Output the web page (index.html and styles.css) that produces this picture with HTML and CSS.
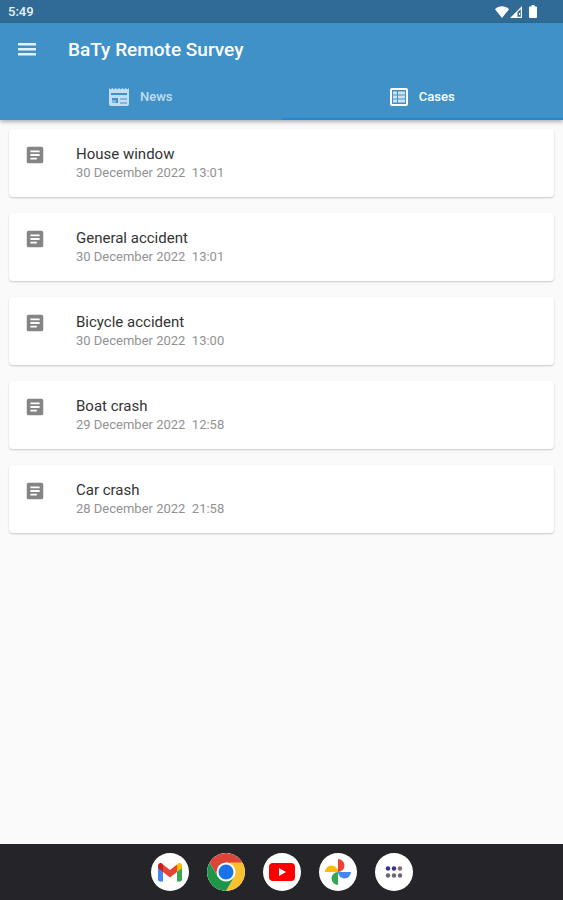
FILE: index.html
```html
<!DOCTYPE html>
<html lang="en">
<head>
    <meta charset="UTF-8">
    <meta name="viewport" content="width=device-width, initial-scale=1.0">
    <title>BaTy Remote Survey</title>
    <link rel="stylesheet" href="styles.css">
</head>
<body>
    <svg class="sprite" aria-hidden="true">
        <symbol id="article" viewBox="0 0 24 24">
            <path fill="currentColor" fill-rule="evenodd" d="M5 3h14a2 2 0 0 1 2 2v14a2 2 0 0 1-2 2H5a2 2 0 0 1-2-2V5a2 2 0 0 1 2-2zM7 7v2h10V7zM7 11v2h10v-2zM7 15v2h7v-2z"/>
        </symbol>
    </svg>

    <div class="status-bar">
        <span>5:49</span>
        <div class="status-icons">
            <svg width="14" height="12" viewBox="0 0 14 12"><path fill="#fff" d="M7 12L0 3.200C4-.6 10-.6 14 3.200z"/></svg>
            <svg width="12" height="12" viewBox="0 0 12 12"><path fill="#fff" fill-rule="evenodd" d="M12 0v12H0zM10.800 3L7.500 6.300v4.500h3.300z"/><path fill="#fff" d="M9 7h1v2H9z"/></svg>
            <svg class="battery" width="8" height="13" viewBox="0 0 8 13"><path fill="#fff" d="M2.500 0h3v1.500H7a1 1 0 0 1 1 1V12a1 1 0 0 1-1 1H1a1 1 0 0 1-1-1V2.500a1 1 0 0 1 1-1h1.500z"/></svg>
        </div>
    </div>

    <header class="header">
        <div class="toolbar">
            <button class="menu-btn" aria-label="Open menu">
                <svg width="18" height="13" viewBox="0 0 18 13"><path fill="#e4f1fa" d="M0 0h18v2.500H0zM0 5h18v2.500H0zM0 10h18v2.500H0z"/></svg>
            </button>
            <h1>BaTy Remote Survey</h1>
        </div>
        <nav class="tabs">
            <a class="tab" href="#news">
                <svg width="20" height="18" viewBox="0 0 20 18"><path fill="currentColor" fill-rule="evenodd" d="M0 0l1.700 1.500L3.300 0 5 1.500 6.700 0l1.600 1.500L10 0l1.700 1.500L13.300 0 15 1.500 16.700 0l1.600 1.500L20 0v16a2 2 0 0 1-2 2H2a2 2 0 0 1-2-2zM2 5v2h16V5zM3 10v5h6v-5zM11 10v2h7v-2zM11 14v2h7v-2z"/><path fill="currentColor" opacity=".5" d="M11 10h7v6h-7zM3 12h4v3H3z"/></svg>
                News
            </a>
            <a class="tab active" href="#cases" aria-current="page">
                <svg width="18" height="18" viewBox="0 0 18 18"><rect x="1" y="1" width="16" height="16" rx="1" fill="none" stroke="currentColor" stroke-width="2"/><path fill="currentColor" opacity=".75" d="M3 3.500h4v3H3zM8 3.500h7v3H8zM3 7.500h4v3H3zM8 7.500h7v3H8zM3 11.500h4v3H3zM8 11.500h7v3H8z"/></svg>
                Cases
            </a>
        </nav>
    </header>

    <main class="cases">
        <article class="case">
            <svg class="case-icon"><use href="#article"/></svg>
            <div>
                <h2>House window</h2>
                <p>30 December 2022&nbsp; 13:01</p>
            </div>
        </article>
        <article class="case">
            <svg class="case-icon"><use href="#article"/></svg>
            <div>
                <h2>General accident</h2>
                <p>30 December 2022&nbsp; 13:01</p>
            </div>
        </article>
        <article class="case">
            <svg class="case-icon"><use href="#article"/></svg>
            <div>
                <h2>Bicycle accident</h2>
                <p>30 December 2022&nbsp; 13:00</p>
            </div>
        </article>
        <article class="case">
            <svg class="case-icon"><use href="#article"/></svg>
            <div>
                <h2>Boat crash</h2>
                <p>29 December 2022&nbsp; 12:58</p>
            </div>
        </article>
        <article class="case">
            <svg class="case-icon"><use href="#article"/></svg>
            <div>
                <h2>Car crash</h2>
                <p>28 December 2022&nbsp; 21:58</p>
            </div>
        </article>
    </main>

    <footer class="dock">
        <button class="app" aria-label="Gmail">
            <svg viewBox="0 0 38 38">
                <path fill="#4285f4" d="M7 13v13.500a2 2 0 0 0 2 2h3V16z"/>
                <path fill="#34a853" d="M26 16v12.500h3a2 2 0 0 0 2-2V13z"/>
                <path fill="#fbbc04" d="M26 11.500V19l5-4v-2c0-3-3-4-5-1.500z"/>
                <path fill="#c5221f" d="M7 13v2l5 4v-7.500C10 9 7 10 7 13z"/>
                <path fill="#ea4335" d="M12 11.500l7 5.500 7-5.500V19l-7 5.500-7-5.500z"/>
            </svg>
        </button>
        <button class="app" aria-label="Chrome">
            <svg viewBox="0 0 38 38">
                <path fill="#db4437" d="M19 19L2.550 9.500A19 19 0 0 1 35.450 9.500z"/>
                <path fill="#db4437" d="M2.550 9.500L10.800 23.800 19 9.500z"/>
                <path fill="#fbc02d" d="M19 9.500h16.450A19 19 0 0 1 19 38l8.200-14.200z"/>
                <path fill="#1e9648" d="M2.550 9.500A19 19 0 0 0 19 38l8.200-14.200H10.800z"/>
                <circle cx="19" cy="19" r="9.500" fill="#fff"/>
                <circle cx="19" cy="19" r="7.500" fill="#1a73e8"/>
            </svg>
        </button>
        <button class="app" aria-label="YouTube">
            <svg viewBox="0 0 38 38"><rect x="6" y="10" width="26" height="18" rx="4" fill="#f00"/><path fill="#fff" d="M16 15v8l7-4z"/></svg>
        </button>
        <button class="app" aria-label="Photos">
            <svg viewBox="0 0 38 38">
                <path fill="#ea4335" d="M19 6a6.500 6.500 0 0 1 0 13z"/>
                <path fill="#fbbc04" d="M6 19a6.500 6.500 0 0 1 13 0z"/>
                <path fill="#4285f4" d="M19 19h13a6.500 6.500 0 0 1-13 0z"/>
                <path fill="#34a853" d="M19 19v13a6.500 6.500 0 0 1 0-13z"/>
            </svg>
        </button>
        <button class="app" aria-label="All apps">
            <svg viewBox="0 0 38 38">
                <g fill="#35338a"><circle cx="13" cy="15.500" r="2.200"/><circle cx="19" cy="15.500" r="2.200"/></g>
                <circle cx="25" cy="15.500" r="2.200" fill="#8c6878"/>
                <g fill="#696878"><circle cx="13" cy="22.500" r="2.200"/><circle cx="19" cy="22.500" r="2.200"/><circle cx="25" cy="22.500" r="2.200"/></g>
            </svg>
        </button>
    </footer>
</body>
</html>
```
FILE: styles.css
```css
* {
    box-sizing: border-box;
}

body {
    display: flex;
    flex-direction: column;
    min-height: 100vh;
    margin: 0;
    background: #fafafa;
    color: #333;
    font-family: Roboto, "Liberation Sans", sans-serif;
}

svg {
    display: block;
}

.sprite {
    display: none;
}

h1,
h2,
p {
    margin: 0;
}

button {
    padding: 0;
    border: none;
    background: none;
    cursor: pointer;
}

.status-bar {
    display: flex;
    justify-content: space-between;
    align-items: center;
    height: 23px;
    padding: 0 26px 0 8px;
    background: #2f6b96;
    color: #e8f2f9;
    font-size: 13px;
    font-weight: 500;
}

.status-icons {
    display: flex;
    align-items: center;
    gap: 1px;
}

.battery {
    margin-left: 6px;
}

.header {
    background: #3f91c8;
    box-shadow: 0 2px 4px rgba(0, 0, 0, 0.3);
}

.toolbar {
    display: flex;
    align-items: center;
    gap: 32px;
    height: 52px;
    padding: 0 18px;
}

h1 {
    color: #fff;
    font-size: 19px;
    font-weight: 500;
}

.tabs {
    display: flex;
}

.tab {
    display: flex;
    flex: 1;
    justify-content: center;
    align-items: center;
    gap: 11px;
    height: 45px;
    border-bottom: 2px solid transparent;
    color: #c3def0;
    font-size: 13px;
    font-weight: 500;
    text-decoration: none;
}

.tab.active {
    border-color: #1b8ade;
    color: #fff;
}

.cases {
    display: flex;
    flex: 1;
    flex-direction: column;
    gap: 16px;
    padding: 9px;
}

.case {
    display: flex;
    gap: 30px;
    height: 68px;
    padding: 15px;
    border-radius: 4px;
    background: #fff;
    box-shadow: 0 1px 2px rgba(0, 0, 0, 0.2);
}

.case-icon {
    width: 22px;
    height: 22px;
    color: #858585;
}

h2 {
    color: #333;
    font-size: 15px;
    font-weight: 400;
    line-height: 20px;
}

.case p {
    color: #929292;
    font-size: 13px;
    line-height: 18px;
}

.dock {
    display: flex;
    justify-content: center;
    align-items: center;
    gap: 18px;
    height: 56px;
    background: #242429;
}

.app {
    width: 38px;
    height: 38px;
    border-radius: 50%;
    background: #fff;
    overflow: hidden;
}
```
